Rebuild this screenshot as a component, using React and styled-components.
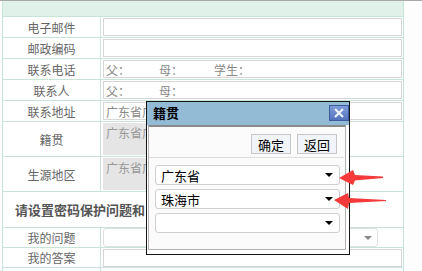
import React from 'react'
import styled, { createGlobalStyle } from 'styled-components'

const GlobalStyle = createGlobalStyle`
  html, body {
    margin: 0;
    padding: 0;
    background: #fdfdfd;
  }
  body {
    font-family: "Noto Sans CJK SC", "Liberation Sans", sans-serif;
    font-size: 12px;
  }
`

const Page = styled.div`
  position: relative;
  width: 422px;
  height: 271px;
  overflow: hidden;
  box-sizing: border-box;
  border-top: 1px solid #a8a8a8;
  padding-left: 2px;
`

const Form = styled.div`
  display: grid;
  grid-template-columns: 97px 302px;
  grid-template-rows: 15px repeat(5, 20px) 34px 34px 35px 19px 19px 20px;
  gap: 1px;
  width: 402px;
  box-sizing: border-box;
  padding: 0 1px 1px;
  background: #c8e4d8;
`

const HeadRow = styled.div`
  grid-column: 1 / -1;
  background: #dff1e8;
`

const Label = styled.div`
  display: flex;
  align-items: center;
  justify-content: center;
  background: #fff;
  color: #666;
`

const Field = styled.div`
  display: flex;
  align-items: ${p => (p.$top ? 'flex-start' : 'center')};
  padding: ${p => (p.$top ? '1px 1px 0 2px' : '0 1px 0 2px')};
  background: #fff;
`

const Section = styled.div`
  grid-column: 1 / -1;
  display: flex;
  align-items: center;
  padding-left: 12px;
  background: #fff;
  color: #555;
  font-size: 13px;
  font-weight: bold;
  white-space: nowrap;
`

const TextBox = styled.div`
  display: flex;
  align-items: center;
  width: ${p => p.$w || 299}px;
  height: 18px;
  box-sizing: border-box;
  padding-left: 2px;
  border: 1px solid #d6d6d6;
  background: #fff;
  color: #888;
  white-space: nowrap;
  overflow: hidden;
`

const Slot = styled.span`
  display: inline-block;
  width: ${p => p.$w}px;
`

const AreaBox = styled.div`
  width: 220px;
  height: 32px;
  box-sizing: border-box;
  padding: 1px 3px;
  background: #e5e5e5;
  color: #999;
  white-space: nowrap;
  overflow: hidden;
`

const SelectBox = styled.div`
  position: relative;
  display: flex;
  align-items: center;
  width: ${p => p.$w}px;
  height: ${p => p.$h || 20}px;
  box-sizing: border-box;
  padding-left: 5px;
  border: 1px solid ${p => p.$line || '#cfcfcf'};
  border-radius: 3px;
  background: #fff;
  color: #000;
  font-size: 13px;
`

const Caret = styled.span`
  position: absolute;
  right: ${p => p.$r || 6}px;
  top: 50%;
  margin-top: -2px;
  width: 0;
  height: 0;
  border-left: 4px solid transparent;
  border-right: 4px solid transparent;
  border-top: 4px solid ${p => p.$c || '#000'};
`

const Dialog = styled.div`
  position: absolute;
  left: 146px;
  top: 100px;
  width: 204px;
  height: 154px;
  box-sizing: border-box;
  display: flex;
  flex-direction: column;
  border: 1px solid #151515;
  background: #fff;
`

const TitleBar = styled.div`
  display: flex;
  justify-content: space-between;
  align-items: flex-start;
  height: 23px;
  padding: 3px 0 0 6px;
  box-sizing: border-box;
  background: #93bbd6;
  color: #000;
  font-size: 13px;
  font-weight: bold;
  line-height: 16px;
`

const CloseBtn = styled.div`
  display: flex;
  align-items: center;
  justify-content: center;
  width: 20px;
  height: 16px;
  box-sizing: border-box;
  border: 1px solid #3d5c9e;
  background: linear-gradient(#7f9cd8, #5473bd);
`

const Body = styled.div`
  flex: 1;
  display: flex;
  padding: 0 3px 4px 1px;
`

const Frame = styled.div`
  flex: 1;
  display: flex;
  flex-direction: column;
  border: 1px solid #b4b4b4;
  border-top: 2px solid #8a8a8a;
  background: #fbfbfb;
`

const Actions = styled.div`
  display: flex;
  justify-content: flex-end;
  gap: 6px;
  padding: 7px 8px 0 0;
`

const Button = styled.div`
  display: flex;
  align-items: center;
  justify-content: center;
  width: 40px;
  height: 20px;
  box-sizing: border-box;
  border: 1px solid #c7c7c7;
  background: #f1f5f9;
  color: #000;
  font-size: 13px;
`

const Divider = styled.div`
  height: 1px;
  margin: 3px 1px 0 0;
  background: #dedede;
`

const Selects = styled.div`
  display: flex;
  flex-direction: column;
  gap: 4px;
  padding: 7px 0 0 6px;
`

const Pointer = styled.svg`
  position: absolute;
  left: 330px;
  top: 166px;
`

export default function App() {
  return (
    <Page>
      <GlobalStyle />
      <Form>
        <HeadRow />
        <Label>电子邮件</Label>
        <Field><TextBox /></Field>
        <Label>邮政编码</Label>
        <Field><TextBox /></Field>
        <Label>联系电话</Label>
        <Field>
          <TextBox>
            <Slot $w={53}>父：</Slot>
            <Slot $w={55}>母：</Slot>
            <Slot>学生：</Slot>
          </TextBox>
        </Field>
        <Label>联系人</Label>
        <Field>
          <TextBox>
            <Slot $w={53}>父：</Slot>
            <Slot $w={55}>母：</Slot>
          </TextBox>
        </Field>
        <Label>联系地址</Label>
        <Field><TextBox>广东省广</TextBox></Field>
        <Label>籍贯</Label>
        <Field $top><AreaBox>广东省广</AreaBox></Field>
        <Label>生源地区</Label>
        <Field $top><AreaBox>广东省广</AreaBox></Field>
        <Section>请设置密码保护问题和</Section>
        <Label>我的问题</Label>
        <Field>
          <SelectBox $w={275} $h={19} $line="#e0e0e0">
            <Caret $c="#888" $r={5} />
          </SelectBox>
        </Field>
        <Label>我的答案</Label>
        <Field><TextBox /></Field>
        <Label />
        <Field />
      </Form>

      <Dialog>
        <TitleBar>
          <span>籍贯</span>
          <CloseBtn>
            <svg width="10" height="10" viewBox="0 0 10 10">
              <path d="M1 1L9 9M9 1L1 9" stroke="#eef2fb" strokeWidth="2.2" />
            </svg>
          </CloseBtn>
        </TitleBar>
        <Body>
          <Frame>
            <Actions>
              <Button>确定</Button>
              <Button>返回</Button>
            </Actions>
            <Divider />
            <Selects>
              <SelectBox $w={185}>广东省<Caret /></SelectBox>
              <SelectBox $w={185}>珠海市<Caret /></SelectBox>
              <SelectBox $w={185}><Caret /></SelectBox>
            </Selects>
          </Frame>
        </Body>
      </Dialog>

      <Pointer width="60" height="46" viewBox="0 0 60 46">
        <path d="M9 11 L23 3 L25 8 L53 9.5 L53 11 L25 13.5 L23 18 Z" fill="#f43a3a" />
        <path d="M4 33 L18 26 L19 31 L56 33 L56 34 L19 36 L18 42 Z" fill="#f43a3a" />
      </Pointer>
    </Page>
  )
}
